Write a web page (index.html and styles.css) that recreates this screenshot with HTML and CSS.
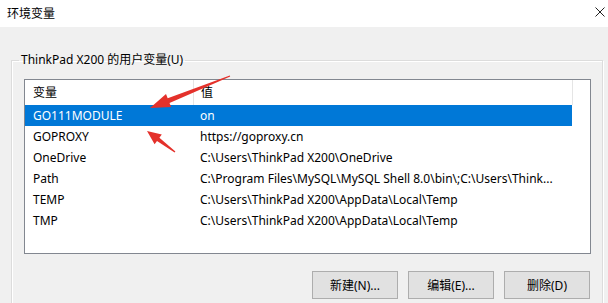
FILE: index.html
```html
<!DOCTYPE html>
<html lang="zh-CN">
<head>
  <meta charset="UTF-8" />
  <title>环境变量</title>
  <link rel="stylesheet" href="styles.css">
</head>
<body>
  <div class="titlebar">
    <span class="title">环境变量</span>
    <svg class="close" width="10" height="10" viewBox="0 0 10 10">
      <path d="M0.5 0.5 L9.5 9.5 M9.5 0.5 L0.5 9.5" stroke="#222" stroke-width="1" fill="none"/>
    </svg>
  </div>

  <div class="content">
    <fieldset class="group">
      <legend>ThinkPad X200 的用户变量(U)</legend>

      <div class="list">
        <div class="row head">
          <span class="col-name">变量</span>
          <span class="col-value">值</span>
        </div>
        <div class="row selected">
          <span class="col-name">GO111MODULE</span>
          <span class="col-value">on</span>
        </div>
        <div class="row">
          <span class="col-name">GOPROXY</span>
          <span class="col-value">https://goproxy.cn</span>
        </div>
        <div class="row">
          <span class="col-name">OneDrive</span>
          <span class="col-value">C:\Users\ThinkPad X200\OneDrive</span>
        </div>
        <div class="row">
          <span class="col-name">Path</span>
          <span class="col-value">C:\Program Files\MySQL\MySQL Shell 8.0\bin\;C:\Users\Think...</span>
        </div>
        <div class="row">
          <span class="col-name">TEMP</span>
          <span class="col-value">C:\Users\ThinkPad X200\AppData\Local\Temp</span>
        </div>
        <div class="row">
          <span class="col-name">TMP</span>
          <span class="col-value">C:\Users\ThinkPad X200\AppData\Local\Temp</span>
        </div>
      </div>

      <div class="buttons">
        <button>新建(N)...</button>
        <button>编辑(E)...</button>
        <button>删除(D)</button>
      </div>
    </fieldset>
  </div>

  <!-- red annotation arrows drawn over the list -->
  <svg class="marks" width="608" height="303" viewBox="0 0 608 303">
    <polygon fill="#e4312b" points="229.8,75.5 167.7,98.3 166,94.1 150,108 171.2,107.1 169.5,102.9 230.2,76.5"/>
    <polygon fill="#e4312b" points="175.4,151.4 159.4,137.8 161.8,134.6 147,131 154.6,144.2 157,141 174.6,152.6"/>
  </svg>
</body>
</html>
```

FILE: styles.css
```css
body {
  margin: 0;
  width: 608px;
  height: 303px;
  overflow: hidden;
  position: relative;
  background: #f0f0f0;
  font-family: "Noto Sans", "Noto Sans CJK SC", sans-serif;
  font-size: 12px;
  color: #000;
}

.titlebar {
  height: 27px;
  background: #fff;
  display: flex;
  align-items: center;
  justify-content: space-between;
  padding: 0 3px 3px 7px;
  box-sizing: border-box;
}

.title {
  font-family: "Noto Sans CJK SC", sans-serif;
  font-size: 12px;
}

.content {
  padding: 25px 5px 0 11px;
}

.group {
  margin: 0;
  height: 240px;
  padding: 11px 11px 0 0;
  border: 1px solid #dcdcdc;
  box-shadow: inset 1px 1px 0 #fff, 1px 1px 0 #fff;
}

.group legend {
  padding: 0 2px;
  margin-left: 7px;
  line-height: 16px;
}

.list {
  width: 565px;
  height: 173px;
  margin-left: 12px;
  background: #fff;
  border: 1px solid #828790;
}

.row {
  display: flex;
  height: 21px;
  align-items: center;
}

.row.head {
  height: 25px;
}

.col-name {
  width: 160px;
  padding-left: 8px;
  white-space: nowrap;
}

.col-value {
  width: 371px;
  padding-left: 7px;
  white-space: nowrap;
}

.head .col-name,
.head .col-value {
  border-right: 1px solid #e5e5e5;
  height: 25px;
  line-height: 25px;
}

.row.selected {
  width: 547px;
  background: #0078d7;
  color: #fff;
}

.buttons {
  display: flex;
  justify-content: flex-end;
  gap: 10px;
  width: 566px;
  margin: 17px 0 0 12px;
}

.buttons button {
  width: 86px;
  height: 28px;
  font-family: "Noto Sans", "Noto Sans CJK SC", sans-serif;
  font-size: 12px;
  background: #e1e1e1;
  border: 1px solid #adadad;
  color: #000;
  padding: 0;
}

.marks {
  position: absolute;
  left: 0;
  top: 0;
  pointer-events: none;
}
```
